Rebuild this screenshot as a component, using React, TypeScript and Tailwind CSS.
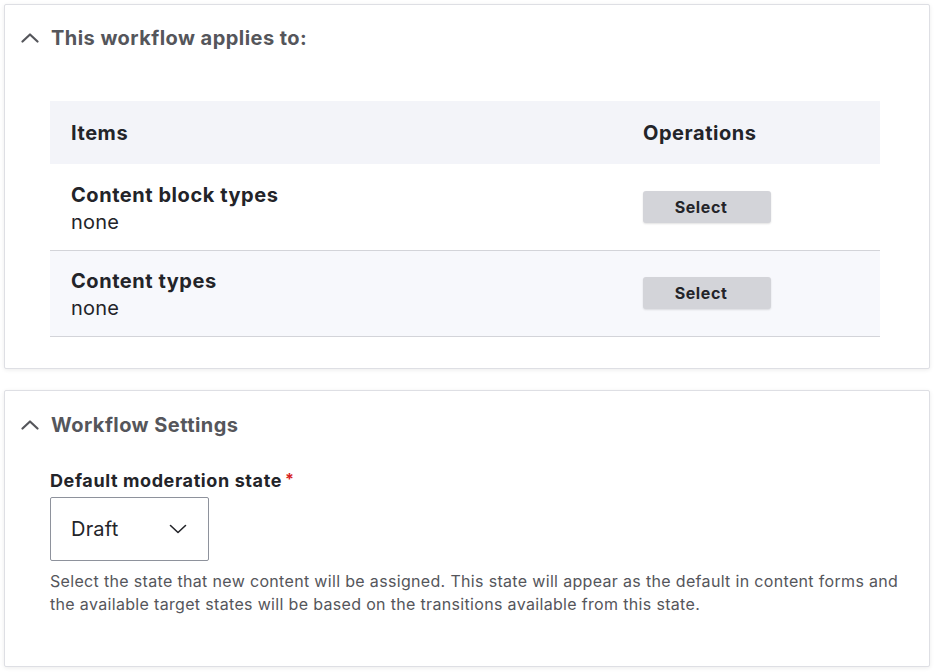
const rows = [
  { title: "Content block types", value: "none", bg: "bg-white" },
  { title: "Content types", value: "none", bg: "bg-[#f7f8fc]" },
];

function Caret({ down = false, className = "" }: { down?: boolean; className?: string }) {
  return (
    <svg viewBox="0 0 18 10" className={className} fill="none" stroke="currentColor" strokeLinecap="round" strokeLinejoin="round">
      <polyline points={down ? "1.5,1.5 9,8.5 16.5,1.5" : "1.5,8.5 9,1.5 16.5,8.5"} />
    </svg>
  );
}

export default function App() {
  return (
    <div className="min-h-[672px] w-[934px] bg-white px-[4px] pt-[4px] font-['Inter',sans-serif] text-[#232429]">
      <section className="rounded-[2px] border border-[#dedfe4] bg-white pb-[31px] shadow-[0_1px_4px_rgba(0,0,0,0.08)]">
        <div className="flex items-center gap-[12px] pl-[16px] pt-[19px]">
          <Caret className="h-[10px] w-[18px] text-[#55565b] [stroke-width:2.2]" />
          <h2 className="text-[20px] font-bold leading-[28px] tracking-[0.45px] text-[#55565b]">This workflow applies to:</h2>
        </div>

        <table className="ml-[45px] mt-[49px] w-[830px] border-collapse text-left">
          <thead>
            <tr className="h-[63px] bg-[#f3f4f9]">
              <th className="pl-[21px] text-[20px] font-bold tracking-[0.55px]">Items</th>
              <th className="w-[237px] text-[20px] font-bold tracking-[0.55px]">Operations</th>
            </tr>
          </thead>
          <tbody>
            {rows.map((r) => (
              <tr key={r.title} className={`h-[86px] border-b border-[#d3d4d9] ${r.bg}`}>
                <td className="pl-[21px] pt-[4px] align-middle">
                  <div className="text-[20px] font-bold leading-[27px] tracking-[0.55px]">{r.title}</div>
                  <div className="text-[20px] leading-[27px] tracking-[0.2px]">{r.value}</div>
                </td>
                <td className="align-middle">
                  <button className="h-[32px] w-[128px] rounded-[3px] bg-[#d3d4d9] pr-[12px] text-[16px] font-bold tracking-[0.6px] text-[#232429] shadow-[0_1px_2px_rgba(0,0,0,0.12)]">
                    Select
                  </button>
                </td>
              </tr>
            ))}
          </tbody>
        </table>
      </section>

      <section className="mt-[21px] rounded-[2px] border border-[#dedfe4] bg-white pb-[50px] shadow-[0_1px_4px_rgba(0,0,0,0.08)]">
        <div className="flex items-center gap-[12px] pl-[16px] pt-[20px]">
          <Caret className="h-[10px] w-[18px] text-[#55565b] [stroke-width:2.2]" />
          <h2 className="text-[20px] font-bold leading-[28px] tracking-[0.45px] text-[#55565b]">Workflow Settings</h2>
        </div>

        <div className="pl-[45px] pt-[30px]">
          <label className="flex items-start text-[18px] font-bold leading-[24px] tracking-[0.6px]">
            Default moderation state
            <span className="ml-[3px] text-[16px] leading-[20px] text-[#d72222]">*</span>
          </label>
          <div className="mt-[4px] flex h-[64px] w-[159px] items-center justify-between rounded-[2px] border border-[#8e929c] pl-[20px] pr-[21px]">
            <span className="text-[20px] tracking-[0.2px]">Draft</span>
            <Caret down className="h-[10px] w-[18px] text-[#232429] [stroke-width:1.6]" />
          </div>
          <p className="mt-[9px] w-[852px] text-[16px] leading-[23px] tracking-[0.33px] text-[#55565b]">
            Select the state that new content will be assigned. This state will appear as the default in content forms and the available target states will be based on the transitions available from this state.
          </p>
        </div>
      </section>
    </div>
  );
}
